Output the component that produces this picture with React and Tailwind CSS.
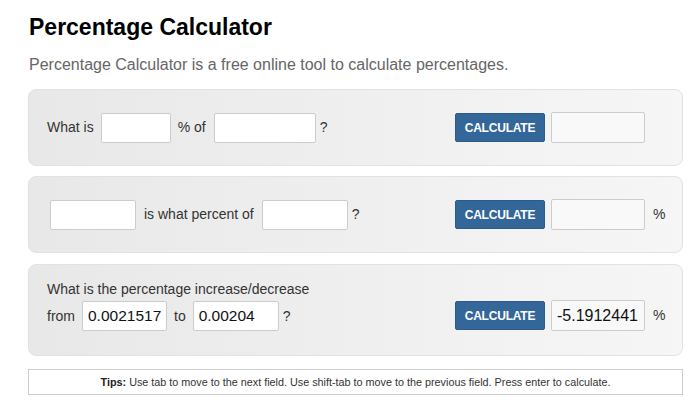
import React, { useState } from "react";

const FONT = { fontFamily: '"Liberation Sans", Arial, sans-serif' };

function TextBox({ value, onChange, className }) {
  return (
    <input
      type="text"
      value={value}
      onChange={(e) => onChange(e.target.value)}
      className={`h-[30px] bg-white border border-[#cccccc] rounded-[2px] px-[5px] text-[15.5px] text-[#111] outline-none ${className}`}
    />
  );
}

function Result({ value, showPercent }) {
  return (
    <div className="flex items-center">
      <input
        type="text"
        readOnly
        value={value}
        className="h-[31px] w-[94px] bg-[#f9f9f9] border border-[#cccccc] rounded-[2px] px-[5px] text-[16px] text-[#111] outline-none"
      />
      {showPercent && <span className="ml-[8px] text-[14px] text-[#333]">%</span>}
    </div>
  );
}

function CalcButton({ onClick }) {
  return (
    <button
      type="button"
      onClick={onClick}
      className="h-[29px] w-[90px] bg-[#336699] border border-[#2d5b88] rounded-[2px] text-white text-[12px] font-bold tracking-[-0.2px] mr-[6px]"
    >
      CALCULATE
    </button>
  );
}

function Panel({ children, right, className = "" }) {
  return (
    <div
      className={`flex border border-[#e2e2e2] rounded-[8px] bg-gradient-to-r from-[#e8e8e8] to-[#f6f6f6] ${className}`}
    >
      <div className="w-[426px] pl-[18px]">{children}</div>
      <div className="flex items-center">{right}</div>
    </div>
  );
}

export default function App() {
  const [a1, setA1] = useState("");
  const [b1, setB1] = useState("");
  const [a2, setA2] = useState("");
  const [b2, setB2] = useState("");
  const [from, setFrom] = useState("0.0021517");
  const [to, setTo] = useState("0.00204");

  return (
    <div className="w-[699px] h-[410px] bg-white" style={FONT}>
      <div className="w-[655px] ml-[28px] pt-[13px]">
        <h1 className="text-[23px] font-bold text-black leading-[28px] ml-[1px]">Percentage Calculator</h1>
        <p className="text-[16px] text-[#666] leading-[20px] mt-[14px] ml-[1px]">
          Percentage Calculator is a free online tool to calculate percentages.
        </p>

        <Panel
          className="h-[77px] mt-[14px]"
          right={
            <>
              <CalcButton />
              <Result value="" />
            </>
          }
        >
          <div className="flex items-center h-full text-[14px] text-[#333]">
            <span>What is</span>
            <TextBox value={a1} onChange={setA1} className="w-[70px] ml-[7px]" />
            <span className="ml-[7px]">% of</span>
            <TextBox value={b1} onChange={setB1} className="w-[102px] ml-[8px]" />
            <span className="ml-[4px]">?</span>
          </div>
        </Panel>

        <Panel
          className="h-[77px] mt-[10px]"
          right={
            <>
              <CalcButton />
              <Result value="" showPercent />
            </>
          }
        >
          <div className="flex items-center h-full text-[14px] text-[#333] ml-[3px]">
            <TextBox value={a2} onChange={setA2} className="w-[86px]" />
            <span className="ml-[8px]">is what percent of</span>
            <TextBox value={b2} onChange={setB2} className="w-[86px] ml-[8px]" />
            <span className="ml-[4px]">?</span>
          </div>
        </Panel>

        <Panel
          className="h-[92px] mt-[11px]"
          right={
            <div className="flex items-center pt-[11px]">
              <CalcButton />
              <Result value="-5.1912441" showPercent />
            </div>
          }
        >
          <div className="pt-[15px] text-[14px] text-[#333]">
            <div className="leading-[18px]">What is the percentage increase/decrease</div>
            <div className="flex items-center mt-[3px]">
              <span>from</span>
              <TextBox value={from} onChange={setFrom} className="w-[85px] ml-[7px]" />
              <span className="ml-[7px]">to</span>
              <TextBox value={to} onChange={setTo} className="w-[86px] ml-[7px]" />
              <span className="ml-[4px]">?</span>
            </div>
          </div>
        </Panel>

        <div className="mt-[13px] h-[26px] border border-[#cccccc] flex items-center justify-center text-[10.8px] text-[#333]">
          <span>
            <b className="text-[#222]">Tips:</b> Use tab to move to the next field. Use shift-tab to move to the previous field. Press enter to calculate.
          </span>
        </div>
      </div>
    </div>
  );
}
